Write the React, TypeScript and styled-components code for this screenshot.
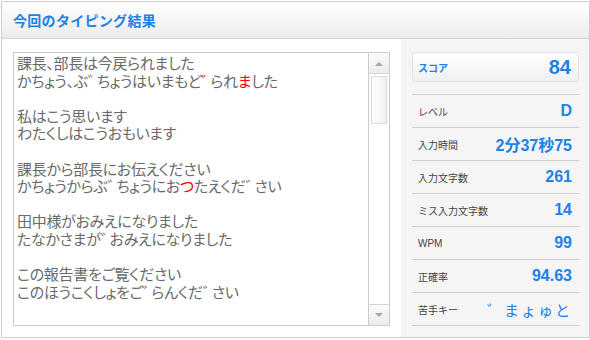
import styled, { createGlobalStyle } from "styled-components";

const GlobalStyle = createGlobalStyle`
  html, body {
    margin: 0;
    padding: 0;
    background: #ffffff;
  }
  body {
    font-family: "Liberation Sans", "Noto Sans CJK JP", sans-serif;
  }
`;

const Frame = styled.div`
  margin: 1px 0 0 1px;
  width: 587px;
  height: 335px;
  border: 1px solid #cfcfcf;
  display: flex;
  flex-direction: column;
`;

const Header = styled.div`
  height: 36px;
  border-bottom: 1px solid #d2d2d2;
  background: linear-gradient(#ffffff, #ececec);
  display: flex;
  align-items: center;
  padding-left: 11px;
`;

const Title = styled.h1`
  margin: 0;
  font-family: "Noto Sans CJK JP", sans-serif;
  font-size: 14px;
  font-weight: bold;
  color: #1c82e6;
  letter-spacing: 0.3px;
`;

const Body = styled.div`
  flex: 1;
  display: flex;
`;

const LeftPane = styled.div`
  width: 377px;
  padding: 13px 11px 11px 11px;
  background: #ffffff;
`;

const TextBox = styled.div`
  height: 272px;
  border: 1px solid #cccccc;
  display: flex;
`;

const TextContent = styled.div`
  flex: 1;
  padding: 1px 0 0 3px;
  font-family: "Noto Sans CJK JP", sans-serif;
  font-size: 15px;
  line-height: 17.6px;
  letter-spacing: -0.3px;
  color: #6a6a6a;
  font-feature-settings: "palt";
`;

const Line = styled.div`
  white-space: nowrap;
  height: 17.6px;
`;

const Dakuten = styled.span<{ $miss?: boolean }>`
  letter-spacing: -6px;
  color: ${(p) => (p.$miss ? "#ff0000" : "inherit")};
`;

const Miss = styled.span`
  color: #ff0000;
`;

const ScrollBar = styled.div`
  width: 20px;
  border-left: 1px solid #cccccc;
  display: flex;
  flex-direction: column;
  background: #ffffff;
`;

const ArrowButton = styled.div<{ $down?: boolean }>`
  height: 20px;
  display: flex;
  align-items: center;
  justify-content: center;
  background: linear-gradient(#fbfbfb, #ececec);
  border-bottom: ${(p) => (p.$down ? "none" : "1px solid #d4d4d4")};
  border-top: ${(p) => (p.$down ? "1px solid #d4d4d4" : "none")};
`;

const Track = styled.div`
  flex: 1;
  padding: 2px 2px;
`;

const Thumb = styled.div`
  height: 46px;
  border: 1px solid #dcdcdc;
  background: linear-gradient(90deg, #fefefe, #f1f1f1);
`;

const RightPane = styled.div`
  flex: 1;
  background: #f5f5f5;
  padding: 13px 10px 0 11px;
`;

const ScoreBox = styled.div`
  height: 28px;
  border: 1px solid #e2e2e2;
  border-radius: 2px;
  background: linear-gradient(#ffffff, #f0f0f0);
  display: flex;
  align-items: center;
  justify-content: space-between;
  padding: 0 7px 0 5px;
`;

const ScoreLabel = styled.span`
  font-family: "Noto Sans CJK JP", sans-serif;
  font-size: 10px;
  color: #1c82e6;
  font-weight: bold;
`;

const ScoreValue = styled.span`
  font-family: "Liberation Sans", sans-serif;
  font-weight: bold;
  font-size: 20px;
  color: #1c82e6;
`;

const StatList = styled.div`
  margin-top: 12px;
  border-top: 1px solid #d0d0d0;
`;

const StatRow = styled.div`
  height: 32px;
  border-bottom: 1px solid #d0d0d0;
  display: flex;
  align-items: center;
  justify-content: space-between;
  padding: 0 7px 0 6px;
`;

const StatLabel = styled.span`
  font-family: "Liberation Sans", "Noto Sans CJK JP", sans-serif;
  font-size: 10px;
  color: #444444;
`;

const StatValue = styled.span`
  font-family: "Liberation Sans", "Noto Sans CJK JP", sans-serif;
  font-weight: bold;
  font-size: 16px;
  color: #1c82e6;
`;

const WeakKeys = styled.span`
  font-family: "Noto Sans CJK JP", sans-serif;
  font-size: 15px;
  color: #1c82e6;
  letter-spacing: 2px;
`;

const Arrow = ({ down }: { down?: boolean }) => (
  <svg width="8" height="5" viewBox="0 0 8 5">
    <path d={down ? "M0 0 L8 0 L4 4 Z" : "M0 5 L8 5 L4 1 Z"} fill="#a8a8a8" />
  </svg>
);

const stats = [
  { label: "レベル", value: "D" },
  { label: "入力時間", value: "2分37秒75" },
  { label: "入力文字数", value: "261" },
  { label: "ミス入力文字数", value: "14" },
  { label: "WPM", value: "99" },
  { label: "正確率", value: "94.63" },
];

export default function App() {
  return (
    <>
      <GlobalStyle />
      <Frame>
        <Header>
          <Title>今回のタイピング結果</Title>
        </Header>
        <Body>
          <LeftPane>
            <TextBox>
              <TextContent>
                <Line>課長、部長は今戻られました</Line>
                <Line>
                  かちょう、ぶ<Dakuten>゛</Dakuten>ちょうはいまもど<Dakuten $miss>゛</Dakuten>られ<Miss>ま</Miss>した
                </Line>
                <Line />
                <Line>私はこう思います</Line>
                <Line>わたくしはこうおもいます</Line>
                <Line />
                <Line>課長から部長にお伝えください</Line>
                <Line>
                  かちょうからぶ<Dakuten>゛</Dakuten>ちょうにお<Miss>つ</Miss>たえくだ<Dakuten>゛</Dakuten>さい
                </Line>
                <Line />
                <Line>田中様がおみえになりました</Line>
                <Line>
                  たなかさまが<Dakuten>゛</Dakuten>おみえになりました
                </Line>
                <Line />
                <Line>この報告書をご覧ください</Line>
                <Line>
                  このほうこくしょをご<Dakuten>゛</Dakuten>らんくだ<Dakuten>゛</Dakuten>さい
                </Line>
              </TextContent>
              <ScrollBar>
                <ArrowButton>
                  <Arrow />
                </ArrowButton>
                <Track>
                  <Thumb />
                </Track>
                <ArrowButton $down>
                  <Arrow down />
                </ArrowButton>
              </ScrollBar>
            </TextBox>
          </LeftPane>
          <RightPane>
            <ScoreBox>
              <ScoreLabel>スコア</ScoreLabel>
              <ScoreValue>84</ScoreValue>
            </ScoreBox>
            <StatList>
              {stats.map((s) => (
                <StatRow key={s.label}>
                  <StatLabel>{s.label}</StatLabel>
                  <StatValue>{s.value}</StatValue>
                </StatRow>
              ))}
              <StatRow>
                <StatLabel>苦手キー</StatLabel>
                <WeakKeys>゛まょゅと</WeakKeys>
              </StatRow>
            </StatList>
          </RightPane>
        </Body>
      </Frame>
    </>
  );
}
